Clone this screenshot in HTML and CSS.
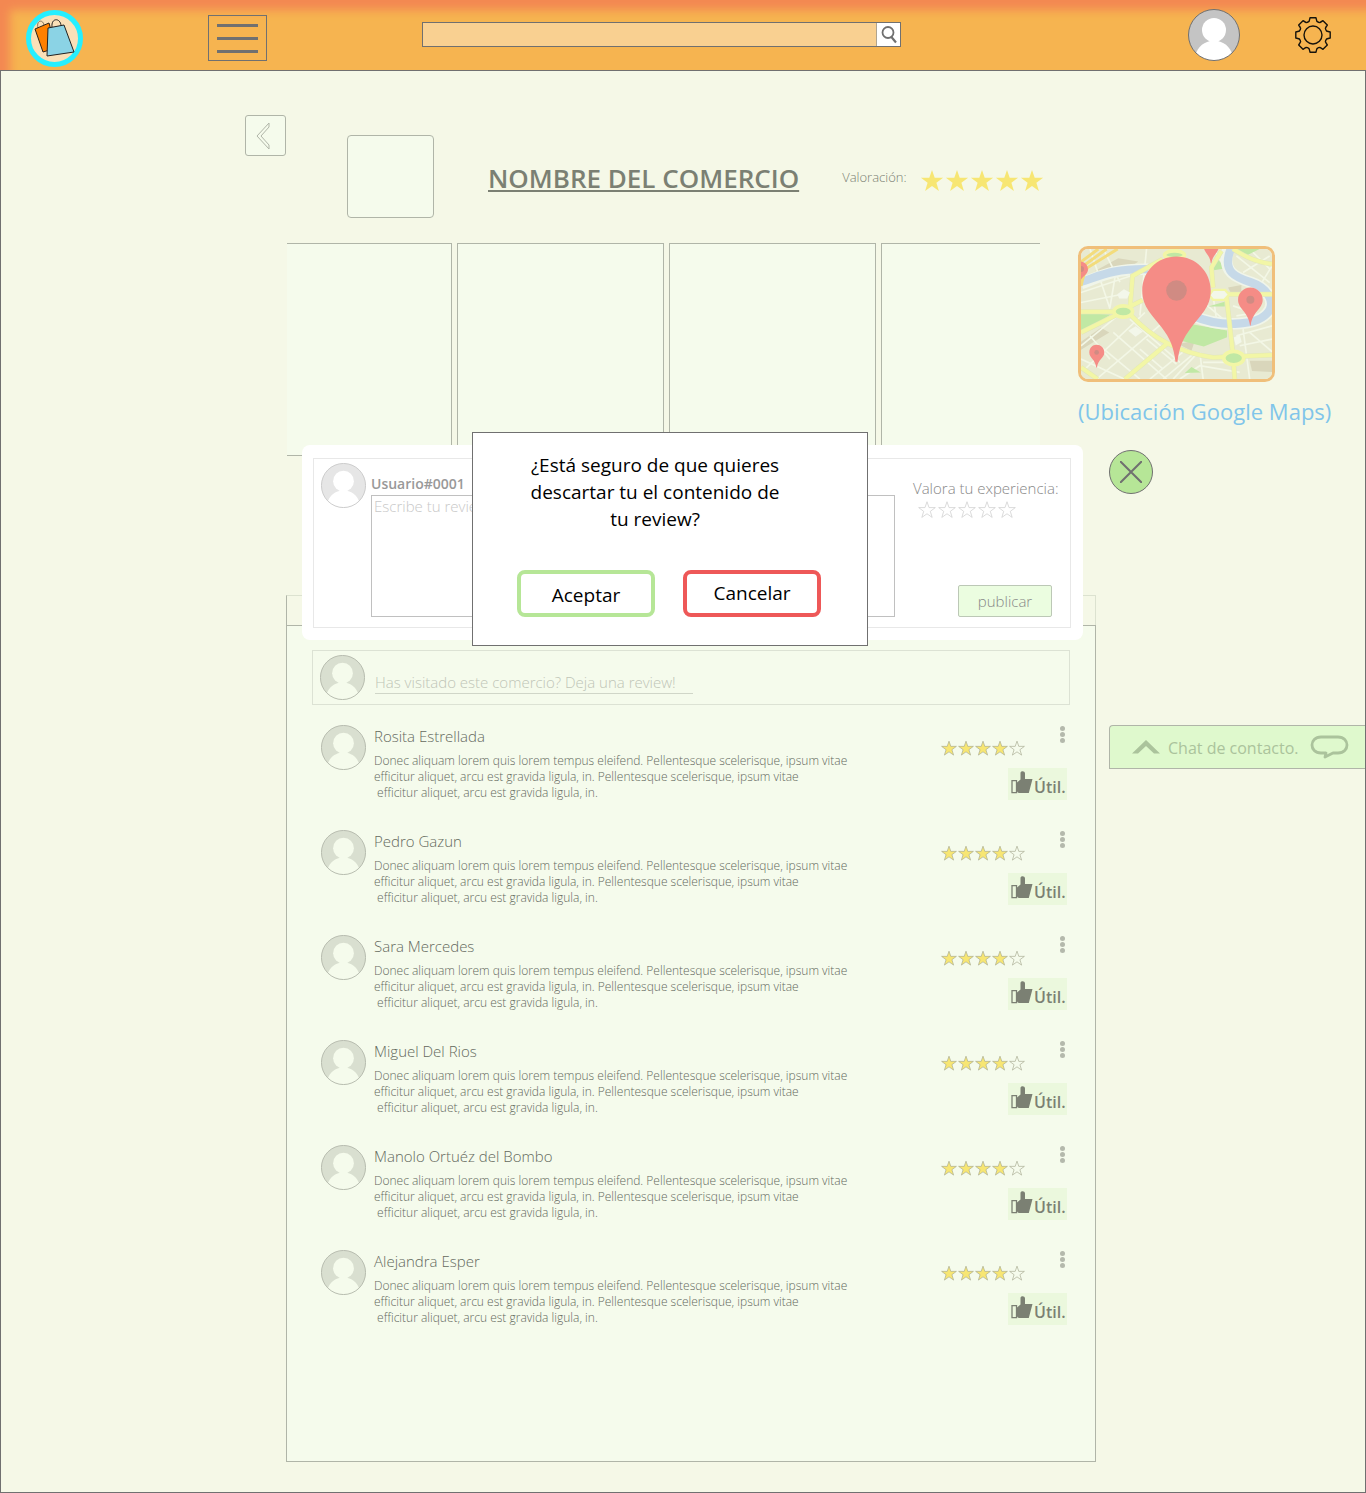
FILE: index.html
```html
<!DOCTYPE html>
<html lang="es">
<head>
<meta charset="utf-8">
<meta name="viewport" content="width=device-width, initial-scale=1">
<title>Nombre del comercio</title>
<link rel="stylesheet" href="styles.css">
</head>
<body>
<svg class="sprite" aria-hidden="true">
  <symbol id="avatar" viewBox="0 0 52 52">
    <clipPath id="avatar-clip"><circle cx="26" cy="26" r="25.5"/></clipPath>
    <circle class="avatar-bg" cx="26" cy="26" r="25.5"/>
    <g class="avatar-fg" clip-path="url(#avatar-clip)"><circle cx="26" cy="21" r="12"/><path d="M21 30h10l-1 2c8 2 14 7 16 20H6c2-13 8-18 16-20z"/></g>
    <circle class="avatar-ring" cx="26" cy="26" r="25.5"/>
  </symbol>
  <symbol id="star" viewBox="0 0 24 24"><path d="M12 1l2.7 7.8h8.4l-6.7 5 2.5 8.1-6.9-4.9-6.9 4.9 2.5-8.1-6.7-5h8.4z"/></symbol>
  <symbol id="thumb" viewBox="0 0 22 23">
    <path fill="none" stroke="currentColor" stroke-width="1.3" d="M1 9.600h4.500v12H1z"/>
    <path fill="currentColor" d="M6 11.500l3.500-3V2c0-2.500 4.500-2.500 4.500.5V8h7.500l-3.700 14H9c-1.500 0-3-.5-3-2z"/>
  </symbol>
</svg>

<header class="topbar">
  <div class="topbar-start">
    <a class="logo" href="#" aria-label="Inicio">
      <svg viewBox="0 0 57 57">
        <circle cx="28.500" cy="28.500" r="26" fill="#fae0b8" stroke="#26efff" stroke-width="5"/>
        <path d="M12 18c-2-8 5-9 6-3" fill="none" stroke="#87735a" stroke-width="1"/>
        <path d="M9 19l14-6 7 25-13 4z" fill="#ff8000" stroke="#2b2118" stroke-width="1"/>
        <path d="M26 17c-1-10 9-9 9-1" fill="none" stroke="#222" stroke-width="1"/>
        <path d="M22 18l16-3 10 27-27 4z" fill="#8bd3e5" stroke="#222" stroke-width="1"/>
      </svg>
    </a>
    <button class="menu-button" type="button" aria-label="Menú"><span></span><span></span><span></span></button>
  </div>
  <form class="search" role="search">
    <input type="search" aria-label="Buscar">
    <button type="submit" aria-label="Buscar"><svg viewBox="0 0 18 20"><g fill="none" stroke="#707070"><circle cx="8" cy="8.500" r="5.500" stroke-width="1.800"/><path d="M11 12.500l5 6" stroke-width="2.200"/></g></svg></button>
  </form>
  <a class="user" href="#" aria-label="Mi perfil"><svg class="avatar"><use href="#avatar"/></svg></a>
  <button class="settings" type="button" aria-label="Ajustes">
    <svg viewBox="-18 -18 36 36" fill="none" stroke="#16130c" stroke-width="1.400" stroke-linejoin="round"><circle r="9"/><path d="M-4-13.600Q-3.500-15-3-17.200H3Q3.500-15 4-13.600 5.500-12.400 6.800-12.400 8-13 10-14.300L14.300-10Q13-8 12.400-6.800 12.500-5.500 13.600-4 15-3.500 17.200-3V3Q15 3.500 13.600 4 12.400 5.500 12.400 6.800 13 8 14.300 10L10 14.300Q8 13 6.800 12.400 5.500 12.400 4 13.600 3.500 15 3 17.200H-3Q-3.500 15-4 13.600-5.500 12.400-6.800 12.400-8 13-10 14.300L-14.300 10Q-13 8-12.400 6.800-12.400 5.500-13.600 4-15 3.500-17.200 3V-3Q-15-3.500-13.600-4-12.400-5.500-12.400-6.800-13-8-14.300-10L-10-14.300Q-8-13-6.800-12.400-5.500-12.400-4-13.600Z"/></svg>
  </button>
</header>

<main class="page">
  <section class="store">
    <button class="back" type="button" aria-label="Volver"><svg viewBox="0 0 14 28"><path d="M13 1v4L5 14l8 9v4L1 14z" fill="none" stroke="currentColor"/></svg></button>
    <div class="store-logo"></div>
    <h1>NOMBRE DEL COMERCIO</h1>
    <p class="store-score">Valoración:</p>
    <div class="stars stars-large" role="img" aria-label="5 de 5 estrellas">
      <svg><use href="#star"/></svg><svg><use href="#star"/></svg><svg><use href="#star"/></svg><svg><use href="#star"/></svg><svg><use href="#star"/></svg>
    </div>
  </section>

  <section class="showcase">
    <div class="gallery"><div></div><div></div><div></div><div></div></div>
    <div class="location">
      <svg class="map" viewBox="33 39 574 391" preserveAspectRatio="xMidYMid slice" role="img" aria-label="Mapa">
        <rect x="33" y="39" width="574" height="391" fill="#e8ead2"/>
        <g fill="#d9d6bb"><path d="M75 105l70-38 60 10-30 22z"/><path d="M33 318l60-42 25 14-85 52z"/><path d="M540 375h67v34l-60-3z"/><path d="M475 155l40-8v28l-32-4z"/><path d="M325 325l50-10-10 30z"/></g>
        <g fill="none" stroke="#f3f7e6" stroke-width="5">
          <path d="M33 170l180-60M33 200l150-30M60 39l60 180M100 39l50 100M140 95l-20 120M230 39l-20 200M33 330l110-90M45 400l180-170M80 430l200-170M33 370l130 60M90 330l120 100M130 290l160 140M180 250l150 130M240 430l110-90M280 430l90-75M310 430l70-75M210 340l70 60M230 310l90 75M60 300l60 70M330 430l60-40 120 20M390 350l10 80M400 380h90M520 280l20 150M540 290l70 60M510 330l97-20M500 300l107-30M430 39l60 90M500 60l100 80M520 110l80-50M540 39l60 60M570 150l37-60M390 190l70 60M400 220l-10 40M430 180l10 70M490 210l60 20M500 240l60-10"/>
        </g>
        <g fill="#c0e8a4"><path d="M33 232l90 4-90 54z"/><path d="M350 262l122 22v20l-70 28-80-20z"/><path d="M430 95l15-25 20 28-38 6z"/><path d="M415 212l50-14v14z"/><path d="M345 412l20-18 28 16z"/><path d="M500 39h70l-50 25z"/></g>
        <path d="M33 143C95 120 130 98 235 100M475 39C455 110 500 125 545 140S625 200 590 235 450 275 370 240" fill="none" stroke="#f0f5ea" stroke-width="35"/>
        <path d="M33 138C95 118 130 98 235 100M483 39C455 110 500 125 545 140S625 200 590 235 450 275 370 240" fill="none" stroke="#c6d9e8" stroke-width="25"/>
        <g fill="none" stroke="#e1e6ba" stroke-width="15"><path d="M33 228h115l70-35M33 290l110-55M180 220l8-100 90-50M180 235q100 110 250 130l177-7M33 395l50 35M165 430l125-105M430 155l-5-60 30-50M470 180l20 180 5 70M475 175h132M490 39q60 40 117 45"/></g>
        <g fill="none" stroke="#f2f6a6" stroke-width="12"><path d="M33 228h115l70-35M33 290l110-55M180 220l8-100 90-50M180 235q100 110 250 130l177-7M33 395l50 35M165 430l125-105M430 155l-5-60 30-50M470 180l20 180 5 70M475 175h132M490 39q60 40 117 45"/></g>
        <g fill="none" stroke="#f3dc7c" stroke-width="9"><path d="M33 95L110 39M33 78L85 39M33 150q10-45 20-55l90-56"/></g>
        <g fill="#c0e8a4" stroke="#f2f6a6" stroke-width="11"><ellipse cx="160" cy="227" rx="28" ry="17"/><ellipse cx="492" cy="367" rx="30" ry="20"/><ellipse cx="314" cy="57" rx="30" ry="12"/></g>
        <path d="M430 162h36l12 14-14 16h-34l-12-14z" fill="#f3f7ea" stroke="#f2f6a6" stroke-width="7"/>
        <g fill="#f3f7ea"><path d="M142 175l20-15 18 10-8 18h-24z"/><path d="M175 285l22-14 22 16-22 16z"/><path d="M492 305l18-8 6 22-18 10z"/></g>
        <g fill="#f58c86"><path d="M320 62c58 0 103 46 103 102 0 50-32 76-57 109-28 36-38 64-43 105h-6c-5-41-15-69-43-105-25-33-57-59-57-109 0-56 45-102 103-102z"/><path d="M542 155c21 0 37 17 37 37 0 28-30 34-36 77h-2c-6-43-36-49-36-77 0-20 16-37 37-37z"/><path d="M80 327c13 0 23 10 23 23 0 17-19 20-22 45h-2c-3-25-21-28-21-45 0-13 9-23 22-23z"/><path d="M33 77c14 3 21 12 21 24 0 13-12 18-21 30zM403 39h43c-4 14-18 20-21 43h-2c-2-23-16-29-20-43z"/></g>
        <g fill="#d08b83"><circle cx="320" cy="164" r="31"/><circle cx="542" cy="192" r="12"/><circle cx="80" cy="350" r="7"/><path d="M33 90a9 9 0 010 18z"/></g>
      </svg>
      <a href="#">(Ubicación Google Maps)</a>
    </div>
  </section>

  <div class="lower">
    <section class="reviews">
      <div class="reviews-tab"></div>
      <div class="reviews-panel">
        <div class="prompt">
          <svg class="avatar"><use href="#avatar"/></svg>
          <input type="text" aria-label="Deja una review" placeholder="Has visitado este comercio? Deja una review!">
        </div>
        <ul class="review-list">
          <li class="review">
            <svg class="avatar"><use href="#avatar"/></svg>
            <div class="review-body"><h2>Rosita Estrellada</h2><p>Donec aliquam lorem quis lorem tempus eleifend. Pellentesque scelerisque, ipsum vitae<br>efficitur aliquet, arcu est gravida ligula, in. Pellentesque scelerisque, ipsum vitae<br>&nbsp;efficitur aliquet, arcu est gravida ligula, in.</p></div>
            <div class="review-side">
              <div class="stars" role="img" aria-label="4 de 5 estrellas"><svg><use href="#star"/></svg><svg><use href="#star"/></svg><svg><use href="#star"/></svg><svg><use href="#star"/></svg><svg class="empty"><use href="#star"/></svg></div>
              <button class="more" type="button" aria-label="Más opciones"><span></span><span></span><span></span></button>
              <button class="useful" type="button"><svg><use href="#thumb"/></svg><span>Útil.</span></button>
            </div>
          </li>
          <li class="review">
            <svg class="avatar"><use href="#avatar"/></svg>
            <div class="review-body"><h2>Pedro Gazun</h2><p>Donec aliquam lorem quis lorem tempus eleifend. Pellentesque scelerisque, ipsum vitae<br>efficitur aliquet, arcu est gravida ligula, in. Pellentesque scelerisque, ipsum vitae<br>&nbsp;efficitur aliquet, arcu est gravida ligula, in.</p></div>
            <div class="review-side">
              <div class="stars" role="img" aria-label="4 de 5 estrellas"><svg><use href="#star"/></svg><svg><use href="#star"/></svg><svg><use href="#star"/></svg><svg><use href="#star"/></svg><svg class="empty"><use href="#star"/></svg></div>
              <button class="more" type="button" aria-label="Más opciones"><span></span><span></span><span></span></button>
              <button class="useful" type="button"><svg><use href="#thumb"/></svg><span>Útil.</span></button>
            </div>
          </li>
          <li class="review">
            <svg class="avatar"><use href="#avatar"/></svg>
            <div class="review-body"><h2>Sara Mercedes</h2><p>Donec aliquam lorem quis lorem tempus eleifend. Pellentesque scelerisque, ipsum vitae<br>efficitur aliquet, arcu est gravida ligula, in. Pellentesque scelerisque, ipsum vitae<br>&nbsp;efficitur aliquet, arcu est gravida ligula, in.</p></div>
            <div class="review-side">
              <div class="stars" role="img" aria-label="4 de 5 estrellas"><svg><use href="#star"/></svg><svg><use href="#star"/></svg><svg><use href="#star"/></svg><svg><use href="#star"/></svg><svg class="empty"><use href="#star"/></svg></div>
              <button class="more" type="button" aria-label="Más opciones"><span></span><span></span><span></span></button>
              <button class="useful" type="button"><svg><use href="#thumb"/></svg><span>Útil.</span></button>
            </div>
          </li>
          <li class="review">
            <svg class="avatar"><use href="#avatar"/></svg>
            <div class="review-body"><h2>Miguel Del Rios</h2><p>Donec aliquam lorem quis lorem tempus eleifend. Pellentesque scelerisque, ipsum vitae<br>efficitur aliquet, arcu est gravida ligula, in. Pellentesque scelerisque, ipsum vitae<br>&nbsp;efficitur aliquet, arcu est gravida ligula, in.</p></div>
            <div class="review-side">
              <div class="stars" role="img" aria-label="4 de 5 estrellas"><svg><use href="#star"/></svg><svg><use href="#star"/></svg><svg><use href="#star"/></svg><svg><use href="#star"/></svg><svg class="empty"><use href="#star"/></svg></div>
              <button class="more" type="button" aria-label="Más opciones"><span></span><span></span><span></span></button>
              <button class="useful" type="button"><svg><use href="#thumb"/></svg><span>Útil.</span></button>
            </div>
          </li>
          <li class="review">
            <svg class="avatar"><use href="#avatar"/></svg>
            <div class="review-body"><h2>Manolo Ortuéz del Bombo</h2><p>Donec aliquam lorem quis lorem tempus eleifend. Pellentesque scelerisque, ipsum vitae<br>efficitur aliquet, arcu est gravida ligula, in. Pellentesque scelerisque, ipsum vitae<br>&nbsp;efficitur aliquet, arcu est gravida ligula, in.</p></div>
            <div class="review-side">
              <div class="stars" role="img" aria-label="4 de 5 estrellas"><svg><use href="#star"/></svg><svg><use href="#star"/></svg><svg><use href="#star"/></svg><svg><use href="#star"/></svg><svg class="empty"><use href="#star"/></svg></div>
              <button class="more" type="button" aria-label="Más opciones"><span></span><span></span><span></span></button>
              <button class="useful" type="button"><svg><use href="#thumb"/></svg><span>Útil.</span></button>
            </div>
          </li>
          <li class="review">
            <svg class="avatar"><use href="#avatar"/></svg>
            <div class="review-body"><h2>Alejandra Esper</h2><p>Donec aliquam lorem quis lorem tempus eleifend. Pellentesque scelerisque, ipsum vitae<br>efficitur aliquet, arcu est gravida ligula, in. Pellentesque scelerisque, ipsum vitae<br>&nbsp;efficitur aliquet, arcu est gravida ligula, in.</p></div>
            <div class="review-side">
              <div class="stars" role="img" aria-label="4 de 5 estrellas"><svg><use href="#star"/></svg><svg><use href="#star"/></svg><svg><use href="#star"/></svg><svg><use href="#star"/></svg><svg class="empty"><use href="#star"/></svg></div>
              <button class="more" type="button" aria-label="Más opciones"><span></span><span></span><span></span></button>
              <button class="useful" type="button"><svg><use href="#thumb"/></svg><span>Útil.</span></button>
            </div>
          </li>
        </ul>
      </div>

      <div class="composer">
        <form class="composer-form">
          <svg class="avatar"><use href="#avatar"/></svg>
          <div class="composer-text">
            <label for="review-text">Usuario#0001</label>
            <textarea id="review-text" placeholder="Escribe tu review"></textarea>
          </div>
          <div class="composer-side">
            <p>Valora tu experiencia:</p>
            <div class="rate">
              <button type="button" aria-label="1 estrella"><svg><use href="#star"/></svg></button>
              <button type="button" aria-label="2 estrellas"><svg><use href="#star"/></svg></button>
              <button type="button" aria-label="3 estrellas"><svg><use href="#star"/></svg></button>
              <button type="button" aria-label="4 estrellas"><svg><use href="#star"/></svg></button>
              <button type="button" aria-label="5 estrellas"><svg><use href="#star"/></svg></button>
            </div>
            <button class="publish" type="submit">publicar</button>
          </div>
        </form>
        <button class="close" type="button" aria-label="Cerrar"><svg viewBox="0 0 22 22"><path d="M0 0l22 22M22 0L0 22" stroke="#707070" stroke-width="2"/></svg></button>
      </div>

      <div class="dialog" role="alertdialog" aria-labelledby="dialog-text">
        <p id="dialog-text">¿Está seguro de que quieres<br>descartar tu el contenido de<br>tu review?</p>
        <div class="dialog-actions">
          <button class="accept" type="button">Aceptar</button>
          <button class="cancel" type="button">Cancelar</button>
        </div>
      </div>
    </section>

    <aside>
      <button class="chat" type="button">
        <svg class="chevron" viewBox="0 0 28 14"><path d="M0 13.500L14 0l14 13.500h-6L14 6l-8 7.500z" fill="currentColor"/></svg>
        <span>Chat de contacto.</span>
        <svg class="bubble" viewBox="0 0 39 24"><path d="M11 2h17c12 0 12 16 0 16h-5l-8 4 1-4h-5c-12 0-12-16 0-16z" fill="none" stroke="currentColor" stroke-width="2.800" stroke-linejoin="round"/></svg>
      </button>
    </aside>
  </div>
</main>
</body>
</html>
```

FILE: styles.css
```css
* { box-sizing: border-box; }

body {
  margin: 0;
  background: #f5f8e7;
  color: #7b8073;
  font-family: "Open Sans", "Noto Sans", sans-serif;
  font-size: 14px;
}

h1, h2, p, ul { margin: 0; padding: 0; }
ul { list-style: none; }
button, input, textarea { font: inherit; color: inherit; margin: 0; padding: 0; border: 0; border-radius: 0; background: none; outline: 0; }
button { cursor: pointer; }
svg { display: block; }
.sprite { position: absolute; width: 0; height: 0; }

.avatar { width: 45px; height: 45px; flex: none; --bg: #d9dfd0; --fg: #f5fbec; --ring: #b0b5a8; }
.avatar-bg { fill: var(--bg); }
.avatar-fg { fill: var(--fg); }
.avatar-ring { fill: none; stroke: var(--ring); }

/* Top bar */
.topbar {
  display: flex;
  align-items: center;
  height: 70px;
  padding: 0 35px 0 26px;
  background: #f6b450;
  box-shadow: inset 10px 10px 10px #f38852;
}
.topbar-start { display: flex; align-items: center; gap: 125px; padding-top: 6px; }
.logo svg { width: 57px; height: 57px; }
.menu-button {
  display: flex; flex-direction: column; align-items: center; justify-content: center; gap: 10px;
  width: 59px; height: 46px; border: 1px solid #707070;
}
.menu-button span { width: 41px; height: 3px; background: #707070; }
.search { display: flex; flex: 0 1 479px; height: 25px; margin: 0 0 2px 155px; border: 1px solid #707070; }
.search input { flex: 1; min-width: 0; background: #f9d091; }
.search button { width: 24px; padding-left: 3px; border-left: 1px solid #b0a48f; background: #fff; }
.search button svg { width: 18px; height: 20px; }
.user { margin-left: auto; }
.user .avatar { width: 52px; height: 52px; --bg: #c4c4c4; --fg: #fff; --ring: #707070; }
.settings { margin-left: 55px; }
.settings svg { width: 36px; height: 36px; }

/* Page */
.page { border: 1px solid #707070; padding-bottom: 30px; }

.store { display: flex; align-items: center; height: 123px; margin: 44px 0 5px; padding-left: 244px; }
.back {
  display: grid; place-items: center; align-self: flex-start;
  width: 41px; height: 41px; padding-right: 6px;
  border: 1px solid #b0b5a8; border-radius: 3px; background: #f5fbec; color: #b0b5a8;
}
.back svg { width: 14px; height: 28px; }
.store-logo { width: 87px; height: 83px; margin-left: 61px; border: 1px solid #b0b5a8; border-radius: 4px; background: #f5fbec; }
.store h1 { margin-left: 54px; padding-top: 2px; font-size: 26px; font-weight: 600; white-space: nowrap; text-decoration: underline; text-decoration-thickness: 2px; text-underline-offset: 2px; }
.store-score { width: 78px; margin-left: 43px; font-size: 13px; font-weight: 300; }

.stars { display: flex; gap: 1px; fill: #f7e673; stroke: #a8ab91; stroke-width: 1px; }
.stars svg { width: 16px; height: 17px; overflow: visible; }
.stars .empty { fill: none; }
.stars-large { gap: 1px; padding-top: 8px; stroke: none; }
.stars-large svg { width: 24px; height: 24px; }

.showcase { display: grid; grid-template-columns: 286fr 753fr 38fr 287fr; }
.gallery { grid-column: 2; display: grid; grid-template-columns: 165fr 207fr 207fr 159fr; gap: 5px; height: 213px; }
.gallery div { border: 1px solid #b0b5a8; background: #f5fbec; }
.gallery div:first-child { border-left: 0; }
.gallery div:last-child { border-right: 0; }
.location { grid-column: 4; padding-top: 3px; }
.map { width: 197px; height: 136px; border: 3px solid #f0bf7a; border-radius: 10px; }
.location a { display: block; margin-top: 14px; color: #80c5ea; font-size: 22px; line-height: 30px; text-decoration: none; white-space: nowrap; }

.lower { display: grid; grid-template-columns: 285fr 810fr 269fr; margin-top: 139px; }
.reviews { grid-column: 2; position: relative; }
.reviews-tab { height: 30px; border: 1px solid #dce2d0; border-left-color: #b0b5a8; border-bottom: 0; }
.reviews-panel { padding: 24px 25px 106px; border: 1px solid #b0b5a8; background: #f5fbec; }

.prompt { display: flex; gap: 10px; height: 55px; padding: 4px 7px; border: 1px solid #dce2d4; }
.prompt input { width: 318px; height: 39px; padding-top: 16px; border-bottom: 1px solid #d0d6c8; font-size: 15px; font-weight: 300; }
::placeholder { color: #bfc5b7; opacity: 1; }

.review-list { margin-top: 20px; }
.review { display: flex; height: 105px; padding: 0 3px 0 9px; }
.review-body { flex: 1; margin-left: 8px; padding-top: 1px; color: #64695d; font-weight: 300; }
.review h2 { font-size: 15px; font-weight: 300; line-height: 20px; }
.review p { margin-top: 7px; font-size: 12px; line-height: 16px; white-space: nowrap; }
.review-side { display: grid; grid-template-columns: 1fr 10px; grid-template-rows: 43px 32px; width: 126px; }
.review-side .stars { padding-top: 15px; }
.more { display: flex; flex-direction: column; align-items: center; gap: 1px; padding-top: 1px; }
.more span { width: 5px; height: 5px; border-radius: 50%; background: #b4b9ac; }
.useful { grid-column: 1 / 3; justify-self: end; display: flex; align-items: center; gap: 1px; width: 59px; padding-left: 3px; background: #ebf8dd; font-size: 16px; font-weight: 600; }
.useful svg { width: 22px; height: 23px; margin-bottom: 4px; flex: none; }
.useful span { padding-top: 6px; }

/* Review composer floating over the list */
.composer { position: absolute; top: -150px; left: 16px; right: 13px; padding: 13px 12px 12px 11px; border-radius: 8px; background: #fff; color: #999; }
.composer .avatar { --bg: #e6e6e6; --fg: #fff; --ring: #c6c6c6; }
.composer-form { display: flex; height: 170px; padding: 4px 18px 10px 7px; border: 1px solid #e8e8e8; }
.composer-text { flex: 1; display: flex; flex-direction: column; margin-left: 5px; }
.composer-text label { height: 32px; padding-top: 11px; font-size: 14px; font-weight: 600; line-height: 20px; }
.composer-text textarea { flex: 1; padding: 0 2px; border: 1px solid #c0c0c0; font-size: 15px; font-weight: 300; line-height: 20px; resize: none; }
.composer-text ::placeholder { color: #c8c8c8; }
.composer-side { display: flex; flex-direction: column; width: 139px; margin-left: 18px; padding-top: 15px; color: #888; font-size: 15px; font-weight: 300; }
.composer-side p { line-height: 20px; white-space: nowrap; }
.rate { display: flex; gap: 2px; margin: 3px 0 0 5px; fill: none; stroke: #cfcfcf; }
.rate svg { width: 18px; height: 18px; }
.publish { width: 94px; height: 32px; margin: auto 0 0 auto; border: 1px solid #bcc8b6; border-radius: 2px; background: #ebfde0; }
.close { position: absolute; top: 5px; left: calc(100% + 26px); display: grid; place-items: center; width: 44px; height: 44px; border: 1px solid #707070; border-radius: 50%; background: #b6e697; }
.close svg { width: 22px; height: 22px; }

/* Confirmation dialog */
.dialog { position: absolute; top: -163px; left: 186px; width: 396px; padding: 19px 44px 28px; border: 1px solid #707070; background: #fff; color: #000; font-size: 19px; line-height: 27px; }
.dialog p { padding-right: 30px; text-align: center; white-space: nowrap; }
.dialog-actions { display: flex; gap: 28px; margin-top: 37px; }
.dialog button { width: 138px; height: 47px; border: 4px solid #b6e697; border-radius: 8px; }
.dialog .accept { padding-top: 4px; }
.dialog .cancel { border-color: #ee5858; }

.chat { display: flex; align-items: center; gap: 8px; width: calc(100% - 13px); height: 44px; margin: 130px 0 0 13px; padding-left: 22px; border: 1px solid #b0b5a8; border-right: 0; border-radius: 4px 0 0 0; background: #dff9cd; color: #abc39c; font-size: 16px; white-space: nowrap; }
.chevron { width: 28px; height: 14px; flex: none; }
.chat span { min-width: 134px; padding-top: 2px; text-align: left; }
.bubble { width: 39px; height: 24px; flex: none; }
```
